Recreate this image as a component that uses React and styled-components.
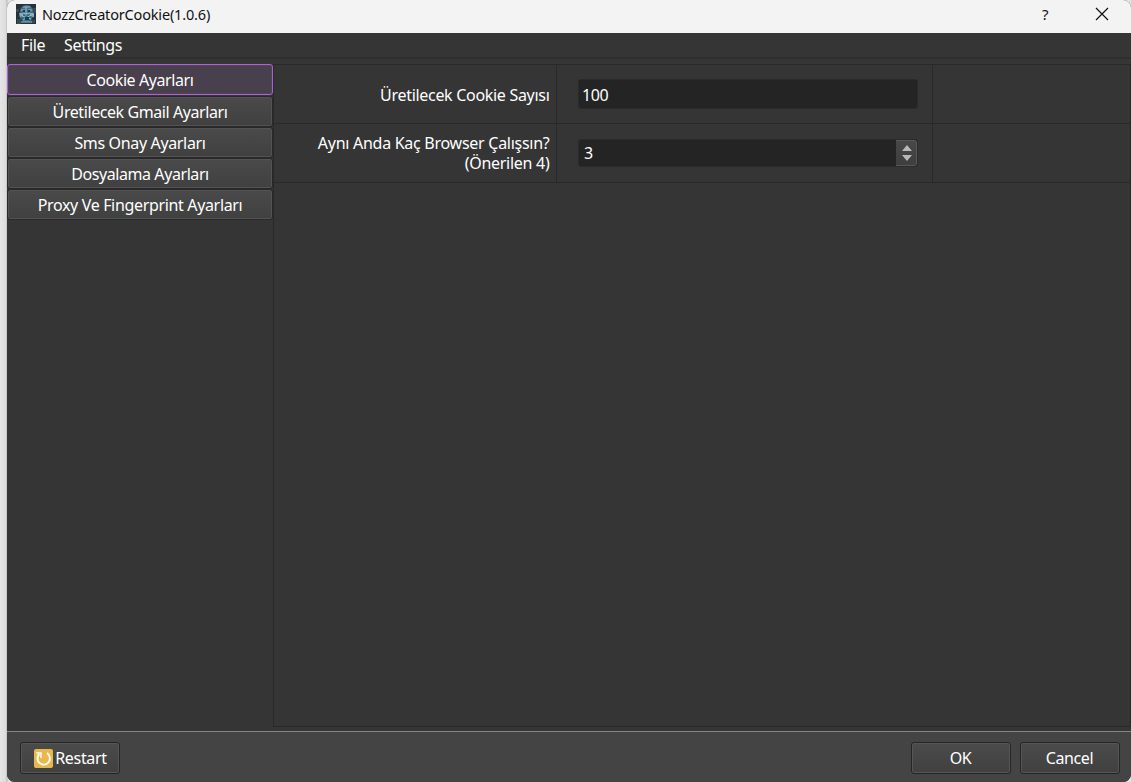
import React from 'react';
import styled, { createGlobalStyle } from 'styled-components';

const Global = createGlobalStyle`
  * { box-sizing: border-box; }
  body { margin: 0; overflow: hidden; background: #e4e4e4; }
  button, input { font: inherit; letter-spacing: inherit; color: inherit; outline: none; }
`;
const Desktop = styled.div`
  width: 1131px; height: 782px; padding-left: 7px;
  background: linear-gradient(90deg, #e6e6e6 0, #dcdcdc 6px, #b5b5b5 7px, #e4e4e4 8px);
`;
const Window = styled.main`
  height: 782px; display: flex; flex-direction: column; overflow: hidden;
  border-radius: 8px; background: #353535; color: #fff;
  font: 16px/20px "Noto Sans", "Open Sans", sans-serif; letter-spacing: -0.5px;
`;
const TitleBar = styled.header`
  height: 33px; flex: none; display: flex; align-items: center;
  padding: 0 22px 5px 9px; background: #f3f3f3; color: #111;
`;
const Title = styled.h1`
  flex: 1; margin: 0 0 0 6px; padding-bottom: 1px;
  font-size: 14.5px; font-weight: 400; letter-spacing: ${p => p.$spacing}px;
`;
const WindowAction = styled.button`
  width: 14px; height: 20px; padding: 0; margin-left: ${p => p.$gap || 0}px;
  border: 0; background: none; font-size: 15px; line-height: 18px; display: grid; place-items: center;
`;
const MenuBar = styled.nav`
  height: 26px; flex: none; display: flex; gap: 19px; padding: 2px 14px 0;
  border-bottom: 2px solid #2e2e2e;
`;
const Label = styled.span`letter-spacing: ${p => p.$spacing ?? -0.38}px; white-space: nowrap;`;
const Body = styled.section`
  height: 672px; flex: none; display: flex; padding-top: 5px;
`;
const Sidebar = styled.aside`
  width: 266px; flex: none; display: flex; flex-direction: column;
`;
const NavButton = styled.button`
  width: 266px; flex: none; height: 31px;
  margin-bottom: ${p => p.$active ? 1 : 0}px;
  padding: ${p => p.$active ? 0 : '1px 0 0'};
  border: 1px solid ${p => p.$active ? '#ad62d8' : '#292929'}; border-radius: 3px;
  background: ${p => p.$active ? '#48404c' : 'linear-gradient(#4a4a4a, #404040)'};
  box-shadow: inset 0 0 0 1px ${p => p.$active ? '#51435a' : '#535353'};
`;
const Panel = styled.div`
  width: 858px; height: 663px; display: flex; flex-direction: column;
  border: 1px solid #292929;
`;
const FormRow = styled.div`
  display: grid; grid-template-columns: 283px 376px 1fr; height: 59px;
  border-bottom: 1px solid #292929;
`;
const Cell = styled.div`
  display: flex; align-items: center; justify-content: ${p => p.$end ? 'flex-end' : 'flex-start'};
  padding: ${p => p.$end ? `${p.$top || 0}px 6.5px 0 0` : '0 14px 0 21px'};
  border-right: ${p => p.$last ? 0 : '1px solid #292929'}; text-align: right;
`;
const Field = styled.div`
  width: 340px; height: ${p => p.$number ? 28 : 30}px; display: flex;
  border: 1px solid #2b2b2b; border-radius: 3px; background: #242424; overflow: hidden;
`;
const FieldInput = styled.input`
  flex: 1; min-width: 0; border: 0; padding: ${p => p.$number ? '0 5px' : '2px 3px 0'};
  background: transparent; letter-spacing: -0.45px;
`;
const Stepper = styled.button`
  width: 21px; border: 1px solid #585858; border-left: 0; border-radius: 0 3px 3px 0;
  padding: 0 0 0 1px; background: linear-gradient(#484848, #3e3e3e); display: grid; place-items: center;
`;
const Footer = styled.footer`
  height: 51px; flex: none; display: flex; align-items: flex-start; gap: 9px;
  padding: 10px 11px 0 13px; background: #444; border-top: 1px solid #858585;
`;
const Spacer = styled.div`flex: 1;`;
const ActionButton = styled.button`
  width: 100px; height: 32px; display: flex; align-items: center; justify-content: center;
  gap: 2px; padding: ${p => p.$icon ? '0 0 0 1px' : '0 1px 0 0'}; border: 1px solid #252525; border-radius: 3px;
  background: linear-gradient(#4b4b4b, #404040); box-shadow: inset 0 0 0 1px #565656;
`;

const AppIcon = () => (
  <svg width="20" height="20" viewBox="0 0 20 20">
    <rect width="20" height="20" fill="#263139" />
    <path d="M0 5h3v3H0M16 4h4v5h-4M1 15h4v5H1M15 16h4v3h-4" fill="#3b4950" />
    <path d="M4 8C4 3 7 1 11 1s6 3 6 8l-3 5H6z" fill="#426f86" />
    <path d="M7 3h7M5 6h4M12 6h4M7 9l3 1 4-1M10 3v10" stroke="#8eb6c6" strokeWidth="1.1" fill="none" />
    <path d="M3 9h4v5H4M14 9h4v4h-4" fill="#8aabb9" />
    <path d="M4 13c4-2 9-2 13 0l-3 5H7z" fill="#2a718f" />
    <path d="M6 12l9 3M15 11l-8 5M5 18h11" stroke="#a7b9c1" strokeWidth="1" />
    <path d="M7 6h2v2H7m5-2h2v2h-2M9 13h4v3H9" fill="#20384a" />
  </svg>
);
const RestartIcon = () => (
  <svg width="19" height="19" viewBox="0 0 19 19">
    <rect width="19" height="19" rx="2" fill="#e8b84c" />
    <path d="M13 4.2A6.2 6.2 0 1 1 5.4 5" fill="none" stroke="#fffbed" strokeWidth="2" />
    <path d="M2.2 4H7V9" fill="none" stroke="#fffbed" strokeWidth="1.7" />
  </svg>
);

const sections = [
  ['Cookie Ayarları', -0.42], ['Üretilecek Gmail Ayarları', -0.42],
  ['Sms Onay Ayarları', -0.35], ['Dosyalama Ayarları', -0.42],
  ['Proxy Ve Fingerprint Ayarları', -0.34],
];

export default function App() {
  return (
    <Desktop>
      <Global />
      <Window>
        <TitleBar>
          <AppIcon />
          <Title $spacing={-0.17}>NozzCreatorCookie(1.0.6)</Title>
          <WindowAction aria-label="Help">?</WindowAction>
          <WindowAction aria-label="Close" $gap={43}>
            <svg width="14" height="14" viewBox="0 0 14 14"><path d="M1 1l12 12M13 1L1 13" stroke="#111" strokeWidth="1.2" /></svg>
          </WindowAction>
        </TitleBar>
        <MenuBar><Label>File</Label><Label>Settings</Label></MenuBar>
        <Body>
          <Sidebar>
            {sections.map(([name, spacing], i) => (
              <NavButton key={name} $active={i === 0}><Label $spacing={spacing}>{name}</Label></NavButton>
            ))}
          </Sidebar>
          <Panel>
            <FormRow>
              <Cell $end $top={2}><Label $spacing={-0.3}>Üretilecek Cookie Sayısı</Label></Cell>
              <Cell><Field><FieldInput defaultValue="100" /></Field></Cell>
              <Cell $last />
            </FormRow>
            <FormRow>
              <Cell $end><Label $spacing={-0.27}>Aynı Anda Kaç Browser Çalışsın?<br />(Önerilen 4)</Label></Cell>
              <Cell>
                <Field $number>
                  <FieldInput $number defaultValue="3" />
                  <Stepper aria-label="Change value">
                    <svg width="10" height="18" viewBox="0 0 10 18"><path d="M0 7L5 1l5 6zM0 11h10l-5 6z" fill="#b8b8b8" /></svg>
                  </Stepper>
                </Field>
              </Cell>
              <Cell $last />
            </FormRow>
          </Panel>
        </Body>
        <Footer>
          <ActionButton $icon><RestartIcon /><Label $spacing={-0.3}>Restart</Label></ActionButton>
          <Spacer />
          <ActionButton><Label>OK</Label></ActionButton>
          <ActionButton><Label>Cancel</Label></ActionButton>
        </Footer>
      </Window>
    </Desktop>
  );
}
